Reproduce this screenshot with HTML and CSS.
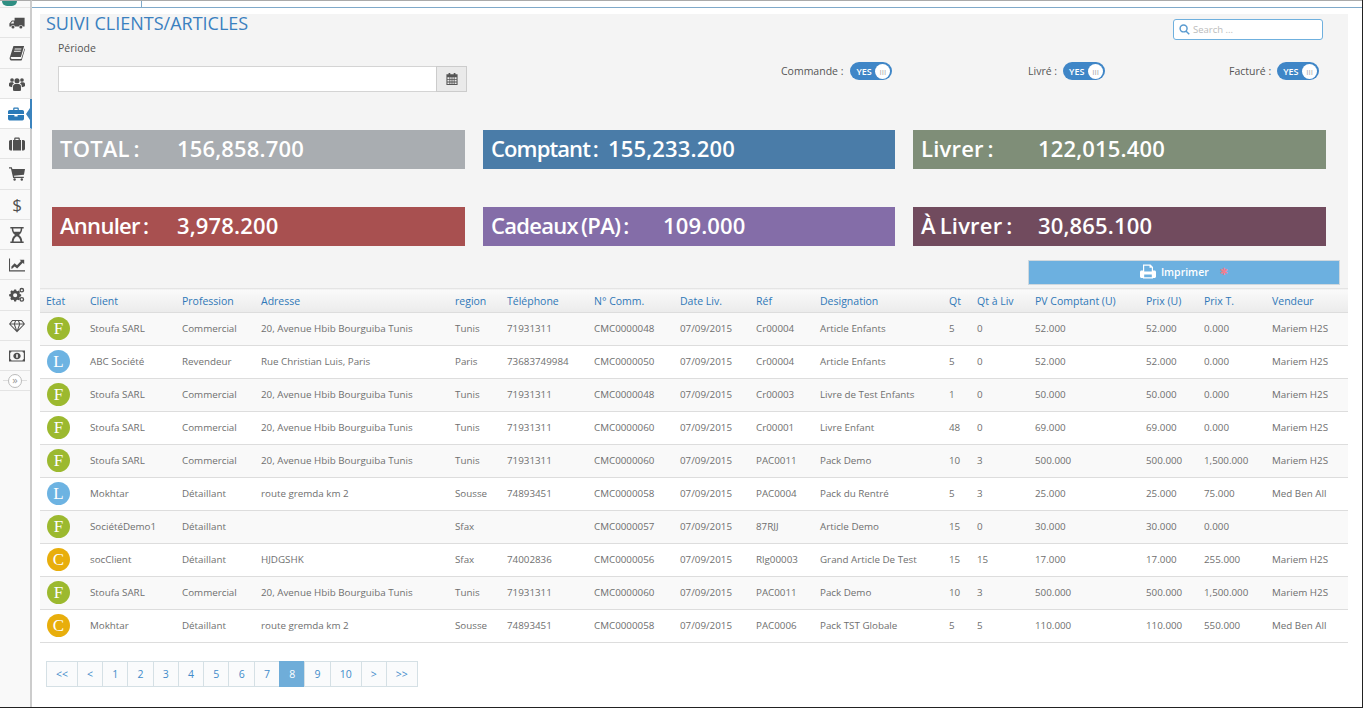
FILE: index.html
```html
<!DOCTYPE html>
<html lang="fr">
<head>
    <meta charset="UTF-8">
    <meta name="viewport" content="width=device-width, initial-scale=1.0">
    <title>Suivi Clients/Articles</title>
    <link rel="stylesheet" href="styles.css">
</head>
<body>
<div class="page">

    <!-- Sidebar -->
    <div class="sidebar">
        <div class="side-top"><span class="side-logo"></span></div>
        <div class="side-item">
            <svg class="side-icon" viewBox="0 0 20 16"><path fill-rule="evenodd" d="M7 1.500h12.500v11h-2.200a2.600 2.600 0 0 0-5.100 0H7.600a2.600 2.600 0 0 0-5.100 0H.5V8.600L3.600 5H7zM6 6H4.200L2 8.600h4z"/><circle cx="5" cy="13" r="1.900"/><circle cx="14.800" cy="13" r="1.900"/></svg>
        </div>
        <div class="side-item">
            <svg class="side-icon" viewBox="0 0 18 18"><path fill-rule="evenodd" d="M5 1h12l-3.600 12.500H2.800C2 13.500 1.700 14.300 2 15c.2.500.8.800 1.500.800h10.300l3.600-12 .6.700-3.500 12c-.2.600-.7 1-1.300 1H3.300C1.800 17.500.500 16.300.700 14.500zM6.500 4l-.3 1h7.500l.3-1zM5.800 6.500l-.3 1H13l.3-1z"/></svg>
        </div>
        <div class="side-item">
            <svg class="side-icon" viewBox="0 0 20 18"><circle cx="10" cy="5" r="3.200"/><circle cx="3.800" cy="4" r="2.300"/><circle cx="16.200" cy="4" r="2.300"/><path d="M5 17v-5c0-1.800 1.500-3 3-3h4c1.500 0 3 1.200 3 3v5c-1.500 1-8.500 1-10 0z"/><path d="M0 11.500V9c0-1.400 1-2.300 2.300-2.300h2.500C5.200 7.600 5.700 8 6.300 8.300 4.800 8.900 4 10.200 4 12v1c-1.500 0-3-.6-4-1.500zM20 11.500V9c0-1.400-1-2.300-2.300-2.300h-2.500c-.4.900-.9 1.300-1.500 1.600 1.500.6 2.300 1.900 2.300 3.700v1c1.500 0 3-.6 4-1.500z"/></svg>
        </div>
        <div class="side-item side-active">
            <svg class="side-icon" viewBox="0 0 20 16"><path fill-rule="evenodd" d="M6.500 3V1.500C6.500.7 7.200 0 8 0h4c.8 0 1.500.7 1.500 1.500V3H18c1.100 0 2 .9 2 2v3H0V5c0-1.100.9-2 2-2zM8 1.500V3h4V1.500z"/><path d="M0 9.200h8V11h4V9.200h8V14c0 1.100-.9 2-2 2H2c-1.100 0-2-.9-2-2z"/></svg>
        </div>
        <div class="side-item">
            <svg class="side-icon" viewBox="0 0 20 16"><path fill-rule="evenodd" d="M6.500 3V1.500C6.500.7 7.200 0 8 0h4c.8 0 1.500.7 1.500 1.500V3H15v13H5V3zM8 1.500V3h4V1.500z"/><path d="M3.800 3v13H2c-1.100 0-2-.9-2-2V5c0-1.100.9-2 2-2zM16.200 3H18c1.100 0 2 .9 2 2v9c0 1.100-.9 2-2 2h-1.800z"/></svg>
        </div>
        <div class="side-item">
            <svg class="side-icon" viewBox="0 0 20 17"><path d="M0 0h3.500l.7 2.300H20l-1.300 7.200-12.600 1.200.4 1.300h12v1.500H5.200L2.400 1.500H0z"/><circle cx="7" cy="15.300" r="1.500"/><circle cx="16" cy="15.300" r="1.500"/></svg>
        </div>
        <div class="side-item side-dollar">$</div>
        <div class="side-item">
            <svg class="side-icon" viewBox="0 0 16 18"><path d="M.5 0h15v1.700h-1.600c0 3-1.300 5.800-3.700 7.300 2.400 1.500 3.700 4.300 3.700 7.300h1.600V18H.5v-1.700h1.600c0-3 1.300-5.800 3.700-7.300C3.400 7.500 2.100 4.700 2.100 1.700H.5zM3.800 1.700c0 1.300.3 2.500.8 3.600h6.800c.5-1.100.8-2.300.8-3.600zM8 10.500c-2.200 1-3.600 3.200-3.800 5.800h7.600C11.600 13.700 10.200 11.500 8 10.500z"/></svg>
        </div>
        <div class="side-item">
            <svg class="side-icon" viewBox="0 0 20 16"><path d="M0 0h1.300v14.700H20V16H0z"/><path d="M3 12.500V9.800l4-4 3 2.500 5-5.300-1.700-1.700H19v5.700l-1.800-1.800-7 7.100-3.200-2.500L3.500 13z"/></svg>
        </div>
        <div class="side-item">
            <svg class="side-icon" viewBox="0 0 20 18"><path fill-rule="evenodd" d="M5.500 3.500h2.400l.4 1.600 1.300.6 1.500-.8 1.700 1.700-.8 1.500.6 1.300 1.600.4v2.400l-1.600.4-.6 1.300.8 1.500-1.700 1.700-1.500-.8-1.300.6-.4 1.600H5.500l-.4-1.600-1.300-.6-1.500.8L.6 15.300l.8-1.500-.6-1.300L-.8 12V9.600l1.600-.4.6-1.300-.8-1.500 1.700-1.700 1.500.8 1.300-.6zM6.700 8.200a2.600 2.600 0 1 0 0 5.200 2.600 2.600 0 0 0 0-5.200z" transform="translate(1 -1.500)"/><path fill-rule="evenodd" d="M16 0a3 3 0 1 1 0 6 3 3 0 0 1 0-6zm0 1.700a1.300 1.300 0 1 0 0 2.600 1.300 1.300 0 0 0 0-2.600zM16 11.500a3 3 0 1 1 0 6 3 3 0 0 1 0-6zm0 1.700a1.300 1.300 0 1 0 0 2.600 1.300 1.300 0 0 0 0-2.600z"/></svg>
        </div>
        <div class="side-item">
            <svg class="side-icon" viewBox="0 0 20 16"><path fill="none" stroke="#555" stroke-width="1.300" stroke-linejoin="round" d="M4.500 1h11L19.300 5.500 10 15 .7 5.500zM.7 5.500h18.600M6.500 5.500 10 15l3.500-9.500M6.500 5.500 8.500 1M13.500 5.500 11.500 1"/></svg>
        </div>
        <div class="side-item">
            <svg class="side-icon" viewBox="0 0 20 14"><path fill-rule="evenodd" d="M0 0h20v14H0zM1.500 3v8C2.800 11 3 11.800 3 12.500h14c0-.7.200-1.500 1.500-1.500V3C17.200 3 17 2.200 17 1.500H3C3 2.200 2.800 3 1.500 3z"/><path fill-rule="evenodd" d="M10 2.800c2.600 0 4.600 1.900 4.600 4.200s-2 4.200-4.600 4.200S5.400 9.300 5.400 7 7.400 2.800 10 2.800zM9 4.800v4.400h2V4.800z"/></svg>
        </div>
        <div class="side-toggle"><span class="side-circle">&raquo;</span></div>
    </div>

    <div class="main">
        <div class="tabs"><span class="tab-first"></span></div>

        <!-- Filters and totals -->
        <div class="panel">
            <div class="panel-head">
                <div class="filter">
                    <h1>SUIVI CLIENTS/ARTICLES</h1>
                    <label class="periode">Période</label>
                    <div class="date-group">
                        <input type="text" class="date-input">
                        <span class="date-addon">
                            <svg class="cal-icon" viewBox="0 0 14 14"><path fill-rule="evenodd" d="M3 0h2v1.500h4V0h2v1.500h2.500V14H.5V1.500H3zM1.700 5v2h2.300V5zm3.300 0v2h1.500V5zm2.500 0v2H9V5zm2.500 0v2h2.300V5zM1.700 8v2h2.300V8zm3.300 0v2h1.500V8zm2.500 0v2H9V8zm2.500 0v2h2.300V8zM1.700 11v1.800h2.300V11zm3.300 0v1.800h1.500V11zm2.500 0v1.800H9V11zm2.500 0v1.800h2.300V11z"/></svg>
                        </span>
                    </div>
                </div>
                <div class="head-right">
                    <div class="search">
                        <svg class="search-icon" viewBox="0 0 12 12"><path fill="none" stroke="#5a9bd0" stroke-width="1.600" d="M5 1a3.800 3.800 0 1 0 0 7.600A3.800 3.800 0 0 0 5 1zM7.800 7.800l3.400 3.400"/></svg>
                        <span class="search-text">Search ...</span>
                    </div>
                    <div class="toggles">
                        <div class="toggle-wrap"><span>Commande :</span><span class="toggle">YES<i class="knob">III</i></span></div>
                        <div class="toggle-wrap"><span>Livré :</span><span class="toggle">YES<i class="knob">III</i></span></div>
                        <div class="toggle-wrap"><span>Facturé :</span><span class="toggle">YES<i class="knob">III</i></span></div>
                    </div>
                </div>
            </div>

            <div class="stats">
                <div class="stat stat-total"><span class="stat-label loose">TOTAL :</span><span class="stat-value">156,858.700</span></div>
                <div class="stat stat-comptant"><span class="stat-label tight">Comptant :</span><span class="stat-value">155,233.200</span></div>
                <div class="stat stat-livrer"><span class="stat-label loose">Livrer :</span><span class="stat-value">122,015.400</span></div>
                <div class="stat stat-annuler"><span class="stat-label">Annuler :</span><span class="stat-value">3,978.200</span></div>
                <div class="stat stat-cadeaux"><span class="stat-label stat-label-wide">Cadeaux (PA) :</span><span class="stat-value">109.000</span></div>
                <div class="stat stat-alivrer"><span class="stat-label loose">À Livrer :</span><span class="stat-value">30,865.100</span></div>
            </div>

            <div class="print-row">
                <button class="print-btn">
                    <svg class="print-icon" viewBox="0 0 16 14"><path fill-rule="evenodd" d="M3 0h7.500L13 2.500V6h1.500c.8 0 1.500.7 1.500 1.500V12c0 .8-.7 1.500-1.500 1.500H13v.5H3v-.5H1.500C.7 13.500 0 12.800 0 12V7.500C0 6.700.7 6 1.500 6H3zM4.200 1.200V7h7.600V3.200H9.500V1.200zM4.200 10v2.800h7.600V10z"/></svg>
                    Imprimer <span class="print-star">&#10033;</span>
                </button>
            </div>
        </div>

        <!-- Table -->
        <table class="orders">
            <colgroup>
                <col class="c-etat"><col class="c-client"><col class="c-prof"><col class="c-addr"><col class="c-region"><col class="c-tel"><col class="c-comm"><col class="c-date"><col class="c-ref"><col class="c-desig"><col class="c-qt"><col class="c-qtl"><col class="c-pv"><col class="c-pu"><col class="c-pt"><col class="c-vend">
            </colgroup>
            <thead>
                <tr><th>Etat</th><th>Client</th><th>Profession</th><th>Adresse</th><th>region</th><th>Téléphone</th><th>N° Comm.</th><th>Date Liv.</th><th>Réf</th><th>Designation</th><th>Qt</th><th>Qt à Liv</th><th>PV Comptant (U)</th><th>Prix (U)</th><th>Prix T.</th><th>Vendeur</th></tr>
            </thead>
            <tbody>
                <tr><td><span class="etat etat-f">F</span></td><td>Stoufa SARL</td><td>Commercial</td><td>20, Avenue Hbib Bourguiba Tunis</td><td>Tunis</td><td>71931311</td><td>CMC0000048</td><td>07/09/2015</td><td>Cr00004</td><td>Article Enfants</td><td>5</td><td>0</td><td>52.000</td><td>52.000</td><td>0.000</td><td>Mariem H2S</td></tr>
                <tr><td><span class="etat etat-l">L</span></td><td>ABC Société</td><td>Revendeur</td><td>Rue Christian Luis, Paris</td><td>Paris</td><td>73683749984</td><td>CMC0000050</td><td>07/09/2015</td><td>Cr00004</td><td>Article Enfants</td><td>5</td><td>0</td><td>52.000</td><td>52.000</td><td>0.000</td><td>Mariem H2S</td></tr>
                <tr><td><span class="etat etat-f">F</span></td><td>Stoufa SARL</td><td>Commercial</td><td>20, Avenue Hbib Bourguiba Tunis</td><td>Tunis</td><td>71931311</td><td>CMC0000048</td><td>07/09/2015</td><td>Cr00003</td><td>Livre de Test Enfants</td><td>1</td><td>0</td><td>50.000</td><td>50.000</td><td>0.000</td><td>Mariem H2S</td></tr>
                <tr><td><span class="etat etat-f">F</span></td><td>Stoufa SARL</td><td>Commercial</td><td>20, Avenue Hbib Bourguiba Tunis</td><td>Tunis</td><td>71931311</td><td>CMC0000060</td><td>07/09/2015</td><td>Cr00001</td><td>Livre Enfant</td><td>48</td><td>0</td><td>69.000</td><td>69.000</td><td>0.000</td><td>Mariem H2S</td></tr>
                <tr><td><span class="etat etat-f">F</span></td><td>Stoufa SARL</td><td>Commercial</td><td>20, Avenue Hbib Bourguiba Tunis</td><td>Tunis</td><td>71931311</td><td>CMC0000060</td><td>07/09/2015</td><td>PAC0011</td><td>Pack Demo</td><td>10</td><td>3</td><td>500.000</td><td>500.000</td><td>1,500.000</td><td>Mariem H2S</td></tr>
                <tr><td><span class="etat etat-l">L</span></td><td>Mokhtar</td><td>Détaillant</td><td>route gremda km 2</td><td>Sousse</td><td>74893451</td><td>CMC0000058</td><td>07/09/2015</td><td>PAC0004</td><td>Pack du Rentré</td><td>5</td><td>3</td><td>25.000</td><td>25.000</td><td>75.000</td><td>Med Ben All</td></tr>
                <tr><td><span class="etat etat-f">F</span></td><td>SociétéDemo1</td><td>Détaillant</td><td></td><td>Sfax</td><td></td><td>CMC0000057</td><td>07/09/2015</td><td>87RJJ</td><td>Article Demo</td><td>15</td><td>0</td><td>30.000</td><td>30.000</td><td>0.000</td><td></td></tr>
                <tr><td><span class="etat etat-c">C</span></td><td>socClient</td><td>Détaillant</td><td>HJDGSHK</td><td>Sfax</td><td>74002836</td><td>CMC0000056</td><td>07/09/2015</td><td>Rlg00003</td><td>Grand Article De Test</td><td>15</td><td>15</td><td>17.000</td><td>17.000</td><td>255.000</td><td>Mariem H2S</td></tr>
                <tr><td><span class="etat etat-f">F</span></td><td>Stoufa SARL</td><td>Commercial</td><td>20, Avenue Hbib Bourguiba Tunis</td><td>Tunis</td><td>71931311</td><td>CMC0000060</td><td>07/09/2015</td><td>PAC0011</td><td>Pack Demo</td><td>10</td><td>3</td><td>500.000</td><td>500.000</td><td>1,500.000</td><td>Mariem H2S</td></tr>
                <tr><td><span class="etat etat-c">C</span></td><td>Mokhtar</td><td>Détaillant</td><td>route gremda km 2</td><td>Sousse</td><td>74893451</td><td>CMC0000058</td><td>07/09/2015</td><td>PAC0006</td><td>Pack TST Globale</td><td>5</td><td>5</td><td>110.000</td><td>110.000</td><td>550.000</td><td>Med Ben All</td></tr>
            </tbody>
        </table>

        <!-- Pagination -->
        <div class="pagination">
            <a class="pg-wide">&lt;&lt;</a><a class="pg-arrow">&lt;</a><a>1</a><a>2</a><a>3</a><a>4</a><a>5</a><a>6</a><a>7</a><a class="pg-active">8</a><a>9</a><a class="pg-ten">10</a><a class="pg-arrow">&gt;</a><a class="pg-wide">&gt;&gt;</a>
        </div>
    </div>
</div>
</body>
</html>
```

FILE: styles.css
```css
* {
    box-sizing: border-box;
}

html, body {
    margin: 0;
    height: 708px;
    overflow: hidden;
}

body {
    font-family: "Open Sans", Arial, sans-serif;
    background-color: #fff;
    color: #555;
    border-bottom: 1px solid #222;
    border-right: 1px solid #222;
}

.page {
    display: flex;
    height: 707px;
}

/* Sidebar */
.sidebar {
    width: 32px;
    flex-shrink: 0;
    background-color: #f9f9f9;
    border-right: 2px solid #ccc;
    border-top: 1px solid #aaa;
}

.side-top {
    height: 7px;
    border-bottom: 1px solid #e4e4e4;
    overflow: hidden;
}

.side-logo {
    display: block;
    width: 15px;
    height: 5px;
    margin-left: 2px;
    background-color: #2f8f83;
    border-radius: 0 0 6px 6px;
}

.side-item {
    height: 30.25px;
    display: flex;
    align-items: center;
    justify-content: center;
    padding: 1px 0 0 4px;
    border-bottom: 1px solid #e4e4e4;
    position: relative;
}

.side-icon {
    width: 16px;
    height: 16px;
    fill: #4f4f4f;
}

.side-dollar {
    font-size: 17px;
    color: #4f4f4f;
}

.side-active {
    background-color: #fff;
    margin-right: -2px;
    border-right: 2px solid #3b83bd;
    padding-right: 2px;
}

.side-active .side-icon {
    fill: #2a7ab8;
}

/* little arrow on the active item */
.side-active::after {
    content: "";
    position: absolute;
    right: 0;
    top: 9px;
    border-style: solid;
    border-width: 6px 4px 6px 0;
    border-color: transparent #3b83bd transparent transparent;
}

.side-toggle {
    height: 20px;
    display: flex;
    align-items: center;
    justify-content: center;
    border-bottom: 1px solid #e4e4e4;
    background: linear-gradient(#ddd, #ddd) no-repeat center / 24px 1px;
}

.side-circle {
    width: 14px;
    height: 14px;
    border: 1px solid #bbb;
    border-radius: 50%;
    background-color: #fff;
    color: #999;
    font-size: 11px;
    line-height: 10px;
    text-align: center;
}

/* Main */
.main {
    flex: 1;
    min-width: 0;
}

.tabs {
    height: 14px;
    border-top: 1px solid #aaa;
    position: relative;
}

.tabs::after {
    content: "";
    display: block;
    height: 1px;
    margin-top: 6px;
    background-color: #7fa9c9;
}

.tab-first {
    position: absolute;
    left: 109px;
    top: 0;
    height: 7px;
    border-left: 1px solid #7fa9c9;
}

.panel {
    margin-left: 8px;
    width: 1308px;
    height: 274px;
    background-color: #f4f4f4;
}

.panel-head {
    display: flex;
    height: 116px;
}

.filter {
    width: 427px;
    padding-left: 6px;
}

h1 {
    margin: -1px 0 0;
    font-size: 18px;
    font-weight: 400;
    line-height: 21px;
    color: #3a80bf;
}

.periode {
    display: block;
    margin: 6px 0 0 12px;
    font-size: 10.500px;
    line-height: 16px;
    color: #555;
}

.date-group {
    display: flex;
    margin: 10px 0 0 12px;
    height: 26px;
}

.date-input {
    flex: 1;
    min-width: 0;
    height: 26px;
    border: 1px solid #d4d4d4;
    background-color: #fff;
}

.date-addon {
    width: 31px;
    display: flex;
    align-items: center;
    justify-content: center;
    background-color: #eaeaea;
    border: 1px solid #ccc;
    margin-left: -1px;
}

.cal-icon {
    width: 12px;
    height: 12px;
    fill: #555;
}

.head-right {
    flex: 1;
}

.search {
    width: 150px;
    height: 21px;
    margin: 5px 0 0 706px;
    display: flex;
    align-items: center;
    padding-left: 5px;
    background-color: #fff;
    border: 1px solid #6fb0de;
    border-radius: 3px;
}

.search-icon {
    width: 11px;
    height: 11px;
    margin-right: 3px;
}

.search-text {
    font-size: 9.500px;
    color: #bbb;
}

.toggles {
    display: grid;
    grid-template-columns: 247px 201px 92px;
    margin: 22px 0 0 314px;
}

.toggle-wrap {
    display: flex;
    align-items: center;
    font-size: 10.500px;
    color: #555;
    height: 18px;
    white-space: nowrap;
}

.toggle {
    width: 42px;
    height: 18px;
    flex-shrink: 0;
    margin-left: 7px;
    padding-left: 6px;
    display: flex;
    align-items: center;
    justify-content: space-between;
    border-radius: 9px;
    background-color: #3f86c7;
    color: #fff;
    font-size: 9px;
    font-weight: 600;
}

.toggle-wrap:nth-child(2) .toggle,
.toggle-wrap:nth-child(3) .toggle {
    margin-left: 6px;
}

.knob {
    width: 15px;
    height: 15px;
    margin-right: 2px;
    border-radius: 50%;
    background-color: #fff;
    color: #aaa;
    font-style: normal;
    font-weight: 400;
    font-size: 8px;
    line-height: 15px;
    text-align: center;
}

.stats {
    display: grid;
    grid-template-columns: 413px 412px 413px;
    grid-auto-rows: 39px;
    column-gap: 18px;
    row-gap: 38px;
    margin-left: 12px;
}

.stat {
    display: flex;
    align-items: center;
    padding: 0 0 4px 8px;
    color: #fff;
    font-size: 22px;
    font-weight: 600;
    white-space: nowrap;
}

.stat-label {
    width: 117px;
    letter-spacing: -0.7px;
    word-spacing: -2px;
}

.stat-label.loose {
    letter-spacing: 0.2px;
}

.stat-label.tight {
    letter-spacing: -0.9px;
}

.stat-label-wide {
    width: 172px;
}

.stat-value {
    letter-spacing: 0.15px;
}

.stat-total { background-color: #a9adb1; }
.stat-comptant { background-color: #4a7ca8; }
.stat-livrer { background-color: #7f8e78; }
.stat-annuler { background-color: #a85050; }
.stat-cadeaux { background-color: #846da8; }
.stat-alivrer { background-color: #714b5e; }

.print-row {
    margin: 14px 0 0 988px;
}

.print-btn {
    width: 312px;
    height: 25px;
    display: flex;
    align-items: center;
    justify-content: center;
    gap: 5px;
    padding: 0 0 2px;
    background-color: #6cb0e0;
    border: 1px solid #cfd8de;
    color: #fff;
    font-family: inherit;
    font-size: 10.500px;
    font-weight: 600;
}

.print-icon {
    width: 16px;
    height: 15px;
    fill: #fff;
}

.print-star {
    margin-left: 6px;
    color: #ef7f8f;
    font-family: "DejaVu Sans", sans-serif;
    font-size: 10px;
}

/* Table */
.orders {
    margin: 0 0 0 8px;
    width: 1308px;
    border-collapse: collapse;
    table-layout: fixed;
    border-top: 1px solid #e4e4e4;
}

.c-etat { width: 44px; }
.c-client { width: 92px; }
.c-prof { width: 79px; }
.c-addr { width: 194px; }
.c-region { width: 52px; }
.c-tel { width: 87px; }
.c-comm { width: 86px; }
.c-date { width: 76px; }
.c-ref { width: 64px; }
.c-desig { width: 129px; }
.c-qt { width: 28px; }
.c-qtl { width: 58px; }
.c-pv { width: 111px; }
.c-pu { width: 58px; }
.c-pt { width: 68px; }
.c-vend { width: 82px; }

th {
    height: 24px;
    padding: 0 0 0 6px;
    text-align: left;
    font-size: 10.500px;
    font-weight: 400;
    color: #2f78b8;
    background: linear-gradient(#fafafa, #ebebeb);
    border-bottom: 1px solid #ddd;
    white-space: nowrap;
}

td {
    height: 33px;
    padding: 0 0 2px 6px;
    font-size: 9.800px;
    color: #6f6f6f;
    border-bottom: 1px solid #ddd;
    white-space: nowrap;
}

tbody tr:nth-child(odd) td {
    background-color: #f9f9f9;
}

.etat {
    display: block;
    width: 23px;
    height: 23px;
    margin-left: 1px;
    border-radius: 50%;
    color: #fff;
    font-family: "Liberation Serif", serif;
    font-size: 17px;
    line-height: 23px;
    text-align: center;
}

.etat-f { background-color: #9cb92f; }
.etat-l { background-color: #6db3e2; }
.etat-c { background-color: #e8ae0c; }

/* Pagination */
.pagination {
    display: flex;
    margin: 18px 0 0 14px;
}

.pagination a {
    width: 26.300px;
    height: 26px;
    margin-right: -1px;
    flex-shrink: 0;
    background-color: #fafbfc;
    border: 1px solid #d5e0e5;
    color: #428bca;
    font-size: 10.500px;
    line-height: 24px;
    text-align: center;
}

.pagination .pg-wide {
    width: 32px;
}

.pagination .pg-arrow {
    width: 26px;
}

.pagination .pg-ten {
    width: 32px;
}

.pagination .pg-active {
    background-color: #6fadd9;
    border-color: #6fadd9;
    color: #fff;
}
```
